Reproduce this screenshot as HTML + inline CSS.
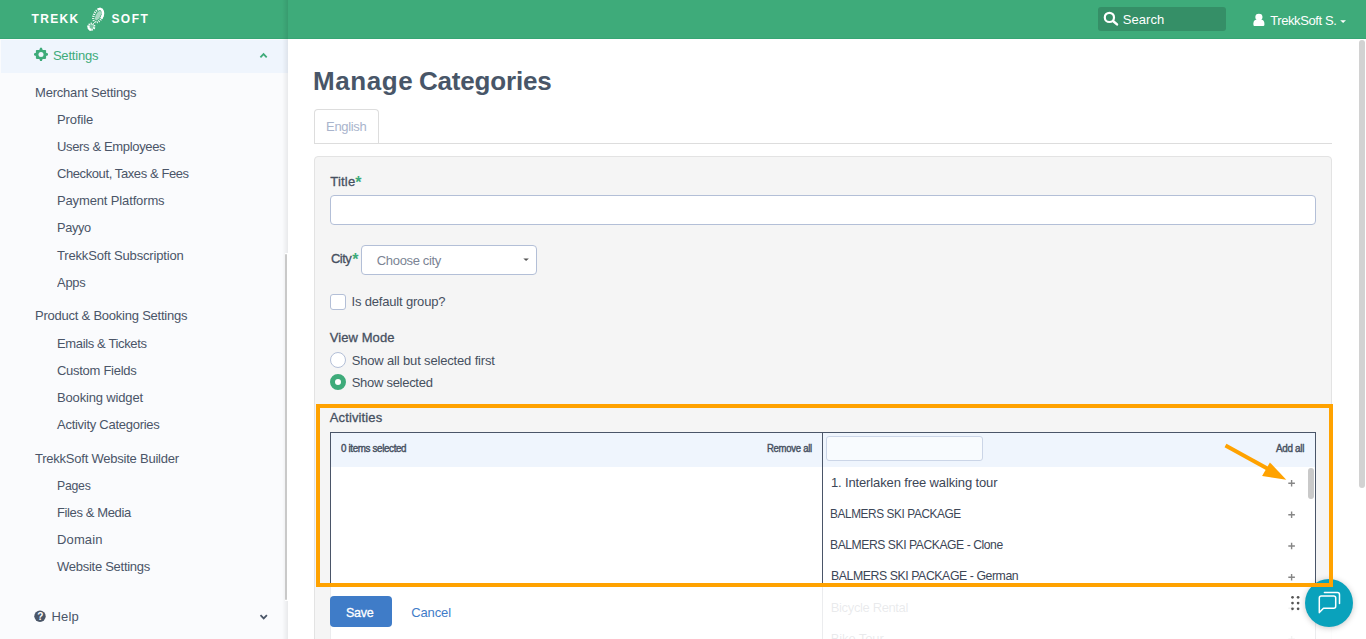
<!DOCTYPE html>
<html lang="en">
<head>
<meta charset="utf-8">
<title>Manage Categories</title>
<style>
*{box-sizing:border-box;margin:0;padding:0}
html,body{width:1366px;height:639px;overflow:hidden;background:#fff}
body{position:relative;font-family:"Liberation Sans",sans-serif;font-size:13px;color:#4a5568}
.a,.t,svg{position:absolute}
.t{white-space:nowrap;display:block;text-decoration:none;font-weight:normal}
svg{overflow:visible}
#hdr{left:0;top:0;width:1366px;height:39px;background:#3eab7a;border-bottom:1px solid #36a574}
#hdrshadow{left:282px;top:0;width:6px;height:39px;background:linear-gradient(to right,rgba(0,0,0,0),rgba(0,0,0,.09))}
#search{left:1098px;top:7px;width:128px;height:24px;border-radius:3px;background:#358f67}
#side{left:0;top:39px;width:288px;height:600px;background:#fafbfd}
#setrow{left:1px;top:40px;width:287px;height:33px;background:#eff5fd}
#sideshadow{left:282px;top:39px;width:6px;height:600px;background:linear-gradient(to right,rgba(0,0,0,0),rgba(0,0,0,.07))}
#sidebar-scroll{left:285px;top:253px;width:3px;height:348px;background:#fff}
#sidebar-scroll i{position:absolute;left:0;top:1px;width:2px;height:346px;background:#c9c9c9;border-radius:1px}
#tab{left:314px;top:109px;width:65px;height:34px;border:1px solid #ddd;border-bottom:0;border-radius:4px 4px 0 0;background:#fff}
#tabline{left:314px;top:143px;width:1018px;height:1px;background:#ddd}
#panel{left:314px;top:156px;width:1018px;height:500px;background:#f5f5f5;border:1px solid #e3e3e3;border-radius:4px}
.inp{background:#fff;border:1px solid #b3bfd7;border-radius:4px}
#title{left:330px;top:195px;width:986px;height:30px}
#city{left:361px;top:245px;width:176px;height:30px}
#chk{left:330px;top:294px;width:16px;height:16px;border-radius:3px}
.radio{left:330px;width:16px;height:16px;border-radius:50%;background:#fff;border:1px solid #b3bfd7}
#r1{top:352px}
#r2{top:374px;border:5.500px solid #3eab7a}
#ms{left:330px;top:432px;width:986px;height:320px;border:1px solid #4a5568;background:#fff}
#mshead{left:331px;top:433px;width:984px;height:34px;background:#eff5fd}
#msdiv{left:822px;top:433px;width:1px;height:320px;background:#4a5568}
#mssearch{left:826px;top:436px;width:157px;height:25px;border:1px solid #cbd5e7;border-radius:3px;background:#f8fbfe}
#msscroll{left:1308px;top:468px;width:6px;height:31px;border-radius:3px;background:#c9c9c9}
#overlay{left:330px;top:587px;width:1003px;height:52px;background:rgba(255,255,255,.89)}
#save{left:330px;top:596px;width:62px;height:31px;border-radius:4px;background:#3f7cc8}
#chat{left:1305px;top:579px;width:48px;height:48px;border-radius:50%;background:#0aa2bc;box-shadow:0 1px 6px rgba(0,0,0,.22)}
#pagescroll{left:1359px;top:40px;width:6px;height:448px;border-radius:3px;background:#d2d2d2}
</style>
</head>
<body>
<!-- header -->
<header>
<div class="a" id="hdr"></div>
<div class="a" id="hdrshadow"></div>
<div class="a" id="search"></div>
<svg id="logo" width="30" height="34" style="left:80px;top:2px" viewBox="80 2 30 34">
<g transform="translate(98.1,15.6) rotate(25)" fill="none" stroke="#fff"><ellipse rx="4.200" ry="7.100" stroke-width="2.300" stroke-dasharray="1 1.100"/><path d="M-2.600-5.600A4.200 7.100 0 0 1 4.100 1.500" stroke-width="2.400"/><ellipse rx="2.300" ry="5" fill="#fff" fill-opacity=".55" stroke="none"/></g>
<g transform="translate(91.4,26.700) rotate(25)" fill="none" stroke="#fff"><ellipse rx="3" ry="3.100" fill="#fff" fill-opacity=".3" stroke-width="2" stroke-dasharray="1 1"/><path d="M-3 .2A3 3.100 0 0 0 1.500 2.700" stroke-width="2.100"/></g>
</svg>
<svg width="16" height="16" style="left:1103px;top:11px" viewBox="1103 11 16 16"><circle cx="1109.400" cy="17.400" r="4.600" fill="none" stroke="#fff" stroke-width="2.200"/><path d="M1113 21L1117 24.400" stroke="#fff" stroke-width="2.500" stroke-linecap="round"/></svg>
<svg width="12" height="14" style="left:1253px;top:13px" viewBox="1253 13 12 14"><ellipse cx="1258.900" cy="17.100" rx="3.600" ry="3.400" fill="#fff"/><path d="M1254.200 25.900q-.8 0-.8-.8v-1.500q0-3.600 3.200-4h4.600q3.200.4 3.200 4v1.500q0 .8-.8.8z" fill="#fff"/></svg>
<svg width="8" height="5" style="left:1340px;top:19px" viewBox="1340 19 8 5"><path d="M1340.2 20.2h5.8l-2.9 2.8z" fill="#fff"/></svg>
<span class="t" style="left:31.6px;top:11.8px;font-size:12px;line-height:14px;letter-spacing:1.33px;color:#fff;font-weight:bold">TREKK</span>
<span class="t" style="left:111.4px;top:11.8px;font-size:12px;line-height:14px;letter-spacing:1.48px;color:#fff;font-weight:bold">SOFT</span>
<span class="t" style="left:1122.7px;top:12.0px;font-size:13px;line-height:15px;letter-spacing:0.06px;color:#fff">Search</span>
<span class="t" style="left:1270.2px;top:13.2px;font-size:13px;line-height:15px;letter-spacing:-0.40px;color:#fff">TrekkSoft S.</span>
</header>
<!-- sidebar -->
<nav>
<div class="a" id="side"></div>
<div class="a" id="setrow"></div>
<div class="a" id="sideshadow"></div>
<div class="a" id="sidebar-scroll"><i></i></div>
<svg width="16" height="16" style="left:33px;top:46px" viewBox="33 46 16 16"><g transform="translate(41,54.4)" fill="#3eab7a"><rect x="-5.1" y="-4.5" width="10.2" height="9" rx=".8"/><path d="M-1.700-4.400L-.9-6.600h1.800L1.700-4.400zM-1.700 4.400L-.9 6.500h1.800L1.700 4.400zM-5-1.600L-7-.8v1.600L-5 1.600zM5-1.600L7-.8v1.600L5 1.600z"/><circle r="2.5" fill="#eff5fd"/></g></svg>
<svg width="10" height="8" style="left:259px;top:52px" viewBox="259 52 10 8"><path d="M260.4 57.3L263.55 54.1L266.7 57.3" fill="none" stroke="#3eab7a" stroke-width="1.8"/></svg>
<svg width="14" height="14" style="left:33px;top:609px" viewBox="33 609 14 14"><circle cx="40" cy="616.3" r="5.7" fill="#4a5668"/></svg>
<span class="t" style="left:37.300px;top:610.800px;font-size:10px;line-height:11px;font-weight:bold;color:#fff">?</span>
<svg width="10" height="8" style="left:259px;top:613px" viewBox="259 613 10 8"><path d="M260.5 615.2L263.7 618.4L266.9 615.2" fill="none" stroke="#4a5668" stroke-width="1.8"/></svg>
<a class="t" style="left:52.9px;top:48.1px;font-size:13px;line-height:15px;letter-spacing:-0.19px;color:#3eab7a">Settings</a>
<a class="t" style="left:35.0px;top:85.0px;font-size:13px;line-height:15px;letter-spacing:-0.20px;color:#4a5568">Merchant Settings</a>
<a class="t" style="left:57.0px;top:112.0px;font-size:13px;line-height:15px;letter-spacing:-0.09px;color:#4a5568">Profile</a>
<a class="t" style="left:57.0px;top:139.0px;font-size:13px;line-height:15px;letter-spacing:-0.35px;color:#4a5568">Users &amp; Employees</a>
<a class="t" style="left:57.0px;top:166.0px;font-size:13px;line-height:15px;letter-spacing:-0.41px;color:#4a5568">Checkout, Taxes &amp; Fees</a>
<a class="t" style="left:57.0px;top:193.0px;font-size:13px;line-height:15px;letter-spacing:-0.14px;color:#4a5568">Payment Platforms</a>
<a class="t" style="left:57.0px;top:220.0px;font-size:13px;line-height:15px;letter-spacing:-0.35px;color:#4a5568;transform:scaleX(0.9817);transform-origin:0 50%">Payyo</a>
<a class="t" style="left:57.0px;top:248.0px;font-size:13px;line-height:15px;letter-spacing:-0.17px;color:#4a5568">TrekkSoft Subscription</a>
<a class="t" style="left:57.0px;top:275.0px;font-size:13px;line-height:15px;letter-spacing:-0.21px;color:#4a5568;transform:scaleX(0.9919);transform-origin:0 50%">Apps</a>
<a class="t" style="left:35.0px;top:308.0px;font-size:13px;line-height:15px;letter-spacing:-0.23px;color:#4a5568">Product &amp; Booking Settings</a>
<a class="t" style="left:57.0px;top:336.0px;font-size:13px;line-height:15px;letter-spacing:-0.36px;color:#4a5568">Emails &amp; Tickets</a>
<a class="t" style="left:57.0px;top:363.0px;font-size:13px;line-height:15px;letter-spacing:-0.28px;color:#4a5568">Custom Fields</a>
<a class="t" style="left:57.0px;top:390.0px;font-size:13px;line-height:15px;letter-spacing:-0.16px;color:#4a5568">Booking widget</a>
<a class="t" style="left:57.0px;top:417.0px;font-size:13px;line-height:15px;letter-spacing:-0.27px;color:#4a5568">Activity Categories</a>
<a class="t" style="left:35.0px;top:451.0px;font-size:13px;line-height:15px;letter-spacing:-0.23px;color:#4a5568">TrekkSoft Website Builder</a>
<a class="t" style="left:57.0px;top:478.0px;font-size:13px;line-height:15px;letter-spacing:-0.26px;color:#4a5568;transform:scaleX(0.9429);transform-origin:0 50%">Pages</a>
<a class="t" style="left:57.0px;top:505.0px;font-size:13px;line-height:15px;letter-spacing:-0.38px;color:#4a5568">Files &amp; Media</a>
<a class="t" style="left:57.0px;top:532.0px;font-size:13px;line-height:15px;letter-spacing:0.14px;color:#4a5568">Domain</a>
<a class="t" style="left:57.0px;top:559.0px;font-size:13px;line-height:15px;letter-spacing:-0.27px;color:#4a5568">Website Settings</a>
<a class="t" style="left:51.4px;top:609.0px;font-size:13px;line-height:15px;letter-spacing:0.20px;color:#4a5568">Help</a>
</nav>
<!-- main -->
<main>
<div class="a" id="tab"></div>
<div class="a" id="tabline"></div>
<div class="a" id="panel"></div>
<div class="a inp" id="title"></div>
<div class="a inp" id="city"></div>
<div class="a inp" id="chk"></div>
<div class="a radio" id="r1"></div>
<div class="a radio" id="r2"></div>
<div class="a" id="ms"></div>
<div class="a" id="mshead"></div>
<div class="a" id="msdiv"></div>
<div class="a" id="mssearch"></div>
<div class="a" id="msscroll"></div>
<svg width="8" height="5" style="left:522px;top:257px" viewBox="522 257 8 5"><path d="M523.3 258.4h5.6l-2.8 2.7z" fill="#555"/></svg>
<svg width="10" height="170" style="left:1287px;top:475px" viewBox="1287 475 10 170"><g stroke="#868686" stroke-width="1.4" fill="none"><path d="M1288.3 483.3h6.6M1291.6 480.0v6.6"/><path d="M1288.3 514.7h6.6M1291.6 511.40000000000003v6.6"/><path d="M1288.3 546h6.6M1291.6 542.7v6.6"/><path d="M1288.3 577.2h6.6M1291.6 573.9000000000001v6.6"/><path d="M1288.3 608.3h6.6M1291.6 605.0v6.6"/><path d="M1288.3 639.3h6.6M1291.6 636.0v6.6"/></g></svg>
<h1><span class="t" style="left:313.1px;top:66.0px;font-size:26px;line-height:30px;letter-spacing:0.54px;color:#485668;font-weight:bold">Manage</span> <span class="t" style="left:419.0px;top:66.0px;font-size:26px;line-height:30px;letter-spacing:-0.19px;color:#485668;font-weight:bold">Categories</span></h1>
<a class="t" style="left:326.1px;top:118.8px;font-size:13px;line-height:15px;letter-spacing:-0.34px;color:#a9b4cc">English</a>
<label class="t" style="left:330.2px;top:174.0px;font-size:13px;line-height:15px;letter-spacing:0.24px;color:#46505f;-webkit-text-stroke:0.3px #46505f">Title</label>
<span class="t" style="left:355.3px;top:174.0px;font-size:16px;line-height:17px;letter-spacing:0.00px;color:#3eab7a;font-weight:bold">*</span>
<label class="t" style="left:330.5px;top:251.0px;font-size:13px;line-height:15px;letter-spacing:-0.50px;color:#46505f;transform:scaleX(0.9959);transform-origin:0 50%;-webkit-text-stroke:0.3px #46505f">City</label>
<span class="t" style="left:352.2px;top:251.0px;font-size:16px;line-height:17px;letter-spacing:0.00px;color:#3eab7a;font-weight:bold">*</span>
<span class="t" style="left:376.8px;top:252.8px;font-size:13px;line-height:15px;letter-spacing:-0.34px;color:#7b8494">Choose city</span>
<label class="t" style="left:351.5px;top:294.2px;font-size:13px;line-height:15px;letter-spacing:-0.18px;color:#46505f">Is default group?</label>
<label class="t" style="left:329.8px;top:330.0px;font-size:13px;line-height:15px;letter-spacing:0.07px;color:#46505f;-webkit-text-stroke:0.3px #46505f">View Mode</label>
<label class="t" style="left:351.7px;top:353.1px;font-size:13px;line-height:15px;letter-spacing:-0.16px;color:#46505f">Show all but selected first</label>
<label class="t" style="left:351.7px;top:375.1px;font-size:13px;line-height:15px;letter-spacing:-0.28px;color:#46505f">Show selected</label>
<label class="t" style="left:329.7px;top:410.2px;font-size:13px;line-height:15px;letter-spacing:0.14px;color:#46505f;-webkit-text-stroke:0.3px #46505f">Activities</label>
<span class="t" style="left:341.3px;top:443.0px;font-size:10px;line-height:11px;letter-spacing:-0.37px;color:#46505f;transform:scaleX(0.9833);transform-origin:0 50%;-webkit-text-stroke:0.4px #46505f">0 items selected</span>
<a class="t" style="left:767.3px;top:443.0px;font-size:10px;line-height:11px;letter-spacing:-0.31px;color:#46505f;transform:scaleX(0.9546);transform-origin:0 50%;-webkit-text-stroke:0.4px #46505f">Remove all</a>
<a class="t" style="left:1276.3px;top:443.0px;font-size:10px;line-height:11px;letter-spacing:-0.31px;color:#46505f;transform:scaleX(0.9873);transform-origin:0 50%;-webkit-text-stroke:0.4px #46505f">Add all</a>
<span class="t" style="left:830.9px;top:475.2px;font-size:13px;line-height:15px;letter-spacing:-0.13px;color:#3c4656">1. Interlaken free walking tour</span>
<span class="t" style="left:830.4px;top:506.2px;font-size:13px;line-height:15px;letter-spacing:-0.44px;color:#3c4656;transform:scaleX(0.9093);transform-origin:0 50%">BALMERS SKI PACKAGE</span>
<span class="t" style="left:830.3px;top:537.1px;font-size:13px;line-height:15px;letter-spacing:-0.48px;color:#3c4656;transform:scaleX(0.9347);transform-origin:0 50%">BALMERS SKI PACKAGE - Clone</span>
<span class="t" style="left:831.0px;top:568.0px;font-size:13px;line-height:15px;letter-spacing:-0.46px;color:#3c4656;transform:scaleX(0.9465);transform-origin:0 50%">BALMERS SKI PACKAGE - German</span>
<span class="t" style="left:830.8px;top:599.8px;font-size:13px;line-height:15px;letter-spacing:-0.37px;color:#3c4656">Bicycle Rental</span>
<span class="t" style="left:830.8px;top:630.8px;font-size:13px;line-height:15px;letter-spacing:-0.13px;color:#3c4656">Bike Tour</span>
<div class="a" id="overlay"></div>
<div class="a" id="save"></div>
<span class="t" style="left:346.4px;top:605.0px;font-size:13px;line-height:15px;letter-spacing:-0.30px;color:#fff;transform:scaleX(0.9605);transform-origin:0 50%;-webkit-text-stroke:0.3px #fff">Save</span>
<a class="t" style="left:411.2px;top:604.9px;font-size:13px;line-height:15px;letter-spacing:-0.12px;color:#3f7cc8">Cancel</a>
</main>
<div class="a" id="chat"></div>
<svg width="14" height="20" style="left:1288px;top:593px" viewBox="1288 593 14 20"><g fill="#555"><circle cx="1292.5" cy="597.3" r="1.35"/><circle cx="1292.5" cy="603.1" r="1.35"/><circle cx="1292.5" cy="608.8" r="1.35"/><circle cx="1298.1" cy="597.3" r="1.35"/><circle cx="1298.1" cy="603.1" r="1.35"/><circle cx="1298.1" cy="608.8" r="1.35"/></g></svg>
<svg width="26" height="26" style="left:1316px;top:590px" viewBox="1316 590 26 26"><g fill="none" stroke="#fff" stroke-width="1.5" stroke-linejoin="round" stroke-linecap="round"><path d="M1319.3 612.6v-14.600q0-2 2-2h12.400q2 0 2 2v8.200q0 2-2 2h-10.200z"/><path d="M1324.400 592.600h13q2.100 0 2.100 2.100v8.700"/></g></svg>
<svg id="anno" width="1366" height="639" style="left:0;top:0" viewBox="0 0 1366 639"><rect x="318" y="406" width="1013" height="179" fill="none" stroke="#ffa200" stroke-width="4"/><path d="M1225.5 445.5L1270 470" stroke="#ffa200" stroke-width="4"/><path d="M1286.3 479.7L1269.9 462.5L1262.1 476z" fill="#ffa200"/></svg>
<div class="a" id="pagescroll"></div>
</body>
</html>
